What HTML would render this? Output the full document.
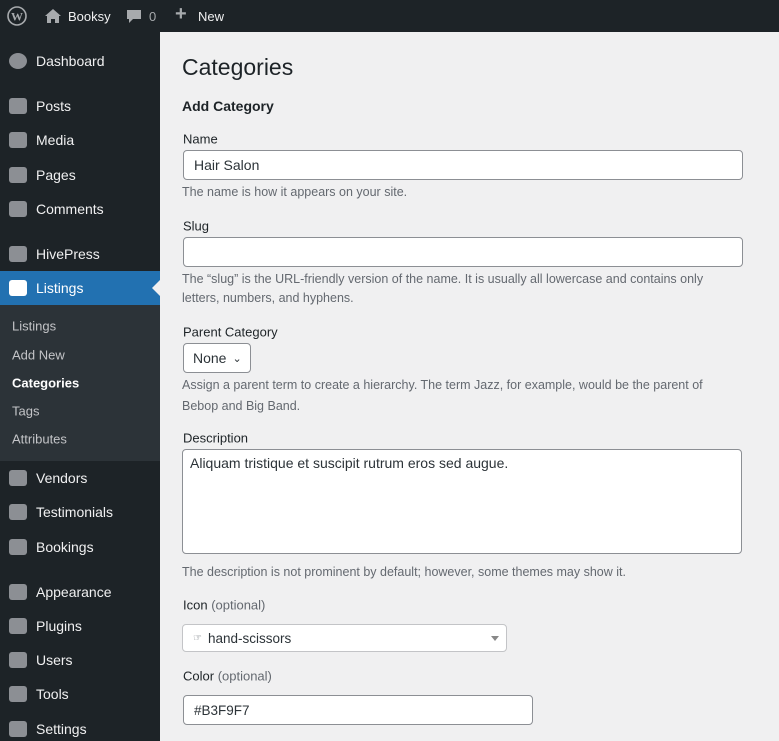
<!DOCTYPE html>
<html><head><meta charset="utf-8"><style>
*{box-sizing:border-box;margin:0;padding:0}
body{width:779px;height:741px;overflow:hidden;background:#f0f0f1;font-family:"Liberation Sans",sans-serif;font-size:13px;color:#3c434a;position:relative}
div,span{white-space:nowrap}
.a{position:absolute}
#bar{position:absolute;left:0;top:0;width:779px;height:32px;background:#1d2327;color:#f0f0f1}
#side{position:absolute;left:0;top:32px;width:160px;height:709px;background:#1d2327}
.m{position:absolute;left:36px;color:#f0f0f1;font-size:14px;transform:translateY(-50%)}
.ic{position:absolute;left:9px;width:18px;height:16px;background:#8c8f94;border-radius:3px;transform:translateY(-50%)}
.s{position:absolute;left:12px;color:#c3c4c7;font-size:13px;transform:translateY(-50%)}
.lbl{position:absolute;left:183px;color:#1d2327;font-size:13px;transform:translateY(-50%)}
.hp{position:absolute;left:182px;color:#646970;font-size:12.5px;transform:translateY(-50%)}
.in{position:absolute;background:#fff;border:1px solid #8c8f94;border-radius:4px;color:#2c3338;font-size:14px;padding-left:10px;display:flex;align-items:center}
</style></head><body>
<div id="bar">
<svg class="a" style="left:7px;top:6px" width="20" height="20" viewBox="0 0 20 20"><circle cx="10" cy="10" r="9" fill="none" stroke="#a7aaad" stroke-width="1.6"/><text x="10" y="14.5" font-size="12" text-anchor="middle" fill="#a7aaad" font-family="Liberation Serif" font-weight="bold">W</text></svg>
<svg class="a" style="left:44px;top:8px" width="18" height="16" viewBox="0 0 18 16"><path d="M9 1L1 8h2v7h4v-4h4v4h4V8h2z" fill="#a7aaad"/></svg>
<div class="a" style="left:68px;top:9px;font-size:13px">Booksy</div>
<svg class="a" style="left:126px;top:9px" width="16" height="16" viewBox="0 0 16 16"><path d="M1 1h14v9H7l-4 4v-4H1z" fill="#a7aaad"/></svg>
<div class="a" style="left:149px;top:9px;color:#a7aaad">0</div>
<div class="a" style="left:175px;top:3px;font-size:20px;color:#a7aaad;font-weight:bold">+</div>
<div class="a" style="left:198px;top:9px">New</div>
</div>
<div id="side">
<div style="position:absolute;left:0;top:239px;width:160px;height:34px;background:#2271b1"></div>
<div style="position:absolute;left:152px;top:248px;width:0;height:0;border-top:8px solid transparent;border-bottom:8px solid transparent;border-right:8px solid #f0f0f1"></div>
<div style="position:absolute;left:0;top:273px;width:160px;height:156px;background:#2c3338"></div>
</div>
<div style="position:absolute;left:0;top:0">
<div class="ic" style="top:61px;border-radius:50%"></div><div class="m" style="top:61px">Dashboard</div>
<div class="ic" style="top:106px"></div><div class="m" style="top:106px">Posts</div>
<div class="ic" style="top:140px"></div><div class="m" style="top:140px">Media</div>
<div class="ic" style="top:175px"></div><div class="m" style="top:175px">Pages</div>
<div class="ic" style="top:209px"></div><div class="m" style="top:209px">Comments</div>
<div class="ic" style="top:254px"></div><div class="m" style="top:254px">HivePress</div>
<div class="ic" style="top:288px;background:#fff"></div><div class="m" style="top:288px;color:#fff">Listings</div>
<div class="s" style="top:326px">Listings</div>
<div class="s" style="top:355px">Add New</div>
<div class="s" style="top:383px;color:#fff;font-weight:bold">Categories</div>
<div class="s" style="top:411px">Tags</div>
<div class="s" style="top:439px">Attributes</div>
<div class="ic" style="top:478px"></div><div class="m" style="top:478px">Vendors</div>
<div class="ic" style="top:512px"></div><div class="m" style="top:512px">Testimonials</div>
<div class="ic" style="top:547px"></div><div class="m" style="top:547px">Bookings</div>
<div class="ic" style="top:592px"></div><div class="m" style="top:592px">Appearance</div>
<div class="ic" style="top:626px"></div><div class="m" style="top:626px">Plugins</div>
<div class="ic" style="top:660px"></div><div class="m" style="top:660px">Users</div>
<div class="ic" style="top:694px"></div><div class="m" style="top:694px">Tools</div>
<div class="ic" style="top:729px"></div><div class="m" style="top:729px">Settings</div>
</div>
<div class="a" style="left:182px;top:54px;font-size:23px;color:#1d2327">Categories</div>
<div class="a" style="left:182px;top:98px;font-size:14px;font-weight:bold;color:#1d2327">Add Category</div>
<div class="lbl" style="top:139px">Name</div>
<div class="in" style="left:183px;top:150px;width:560px;height:30px">Hair Salon</div>
<div class="hp" style="top:192px">The name is how it appears on your site.</div>
<div class="lbl" style="top:226px">Slug</div>
<div class="in" style="left:183px;top:237px;width:560px;height:30px"></div>
<div class="hp" style="top:279px">The “slug” is the URL-friendly version of the name. It is usually all lowercase and contains only</div>
<div class="hp" style="top:298px">letters, numbers, and hyphens.</div>
<div class="lbl" style="top:332px">Parent Category</div>
<div class="in" style="left:183px;top:343px;width:68px;height:30px;padding-left:9px">None <span style="margin-left:6px;font-size:11px">&#8964;</span></div>
<div class="hp" style="top:385px">Assign a parent term to create a hierarchy. The term Jazz, for example, would be the parent of</div>
<div class="hp" style="top:406px">Bebop and Big Band.</div>
<div class="lbl" style="top:438px">Description</div>
<div class="in" style="left:182px;top:449px;width:560px;height:105px;align-items:flex-start;padding-top:5px;padding-left:7px">Aliquam tristique et suscipit rutrum eros sed augue.</div>
<div class="hp" style="top:572px">The description is not prominent by default; however, some themes may show it.</div>
<div class="lbl" style="top:605px">Icon <span style="color:#646970">(optional)</span></div>
<div class="in" style="left:182px;top:624px;width:325px;height:28px;border-color:#c3c4c7;font-size:13.5px"><span style="font-size:10px;margin-right:6px;color:#646970">☞</span>hand-scissors<span style="position:absolute;right:7px;top:11px;border-left:4px solid transparent;border-right:4px solid transparent;border-top:5px solid #888"></span></div>
<div class="lbl" style="top:676px">Color <span style="color:#646970">(optional)</span></div>
<div class="in" style="left:183px;top:695px;width:350px;height:30px;font-size:13.5px">#B3F9F7</div>
</body></html>
